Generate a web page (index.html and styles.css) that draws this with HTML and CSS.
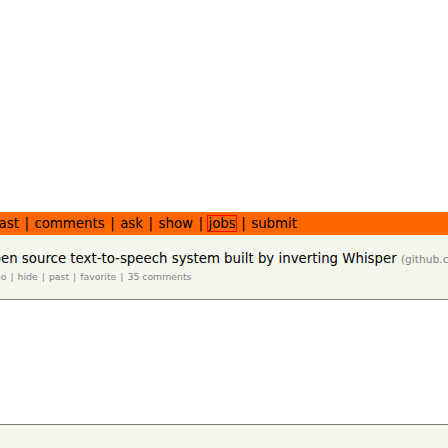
FILE: index.html
```html
<!DOCTYPE html>
<html>
<head>
<meta charset="utf-8">
<link rel="stylesheet" href="styles.css">
</head>
<body>
<div class="top-space"></div>
<header class="bar">
  <div class="nav"><a>new</a><span class="sep">|</span><a>past</a><span class="sep">|</span><a>comments</a><span class="sep">|</span><a>ask</a><span class="sep">|</span><a>show</a><span class="sep">|</span><a class="sel">jobs</a><span class="sep">|</span><a>submit</a></div>
</header>
<section class="item">
  <div class="title"><span class="titletext">Open source text-to-speech system built by inverting Whisper</span> <span class="site">(github.com/collabora)</span></div>
  <div class="sub">3 hours ago<span class="sep2">|</span>hide<span class="sep2">|</span>past<span class="sep2">|</span>favorite<span class="sep2">|</span>35 comments</div>
</section>
<div class="rule"></div>
<div class="blank"></div>
<div class="rule"></div>
<div class="foot"></div>
</body>
</html>
```

FILE: styles.css
```css
html, body {
  margin: 0;
  padding: 0;
  background: #ffffff;
  font-family: "DejaVu Sans", Verdana, sans-serif;
  overflow: hidden;
}
body {
  width: 448px;
  height: 448px;
  display: flex;
  flex-direction: column;
}
.top-space {
  height: 212px;
  flex: none;
}
.bar {
  flex: none;
  height: 23px;
  box-sizing: border-box;
  padding-top: 4px;
  background: #ff6600;
  overflow: hidden;
  white-space: nowrap;
}
.nav {
  font-size: 13.33px;
  line-height: 16px;
  color: #000000;
  margin-left: -53px;
}
.nav a {
  color: #000000;
}
.sep {
  display: inline-block;
  padding: 0 5.5px;
  color: #000000;
}
.sel {
  outline: 1px solid #ff0000;
}
.item {
  flex: none;
  height: 64px;
  box-sizing: border-box;
  padding-top: 16px;
  background: #f6f6ef;
  overflow: hidden;
  white-space: nowrap;
}
.title {
  font-size: 13.33px;
  line-height: 16px;
  color: #000000;
  margin-left: -18px;
}
.site {
  font-size: 10.67px;
  color: #828282;
}
.sub {
  margin-top: 3px;
  font-size: 9.33px;
  line-height: 12px;
  color: #828282;
  margin-left: -49px;
}
.sep2 {
  display: inline-block;
  padding: 0 4px;
}
.rule {
  flex: none;
  height: 1px;
  background: #7a7a7a;
}
.blank {
  flex: none;
  height: 124px;
  background: #ffffff;
}
.foot {
  flex: 1;
  background: #f6f6ef;
}
```
